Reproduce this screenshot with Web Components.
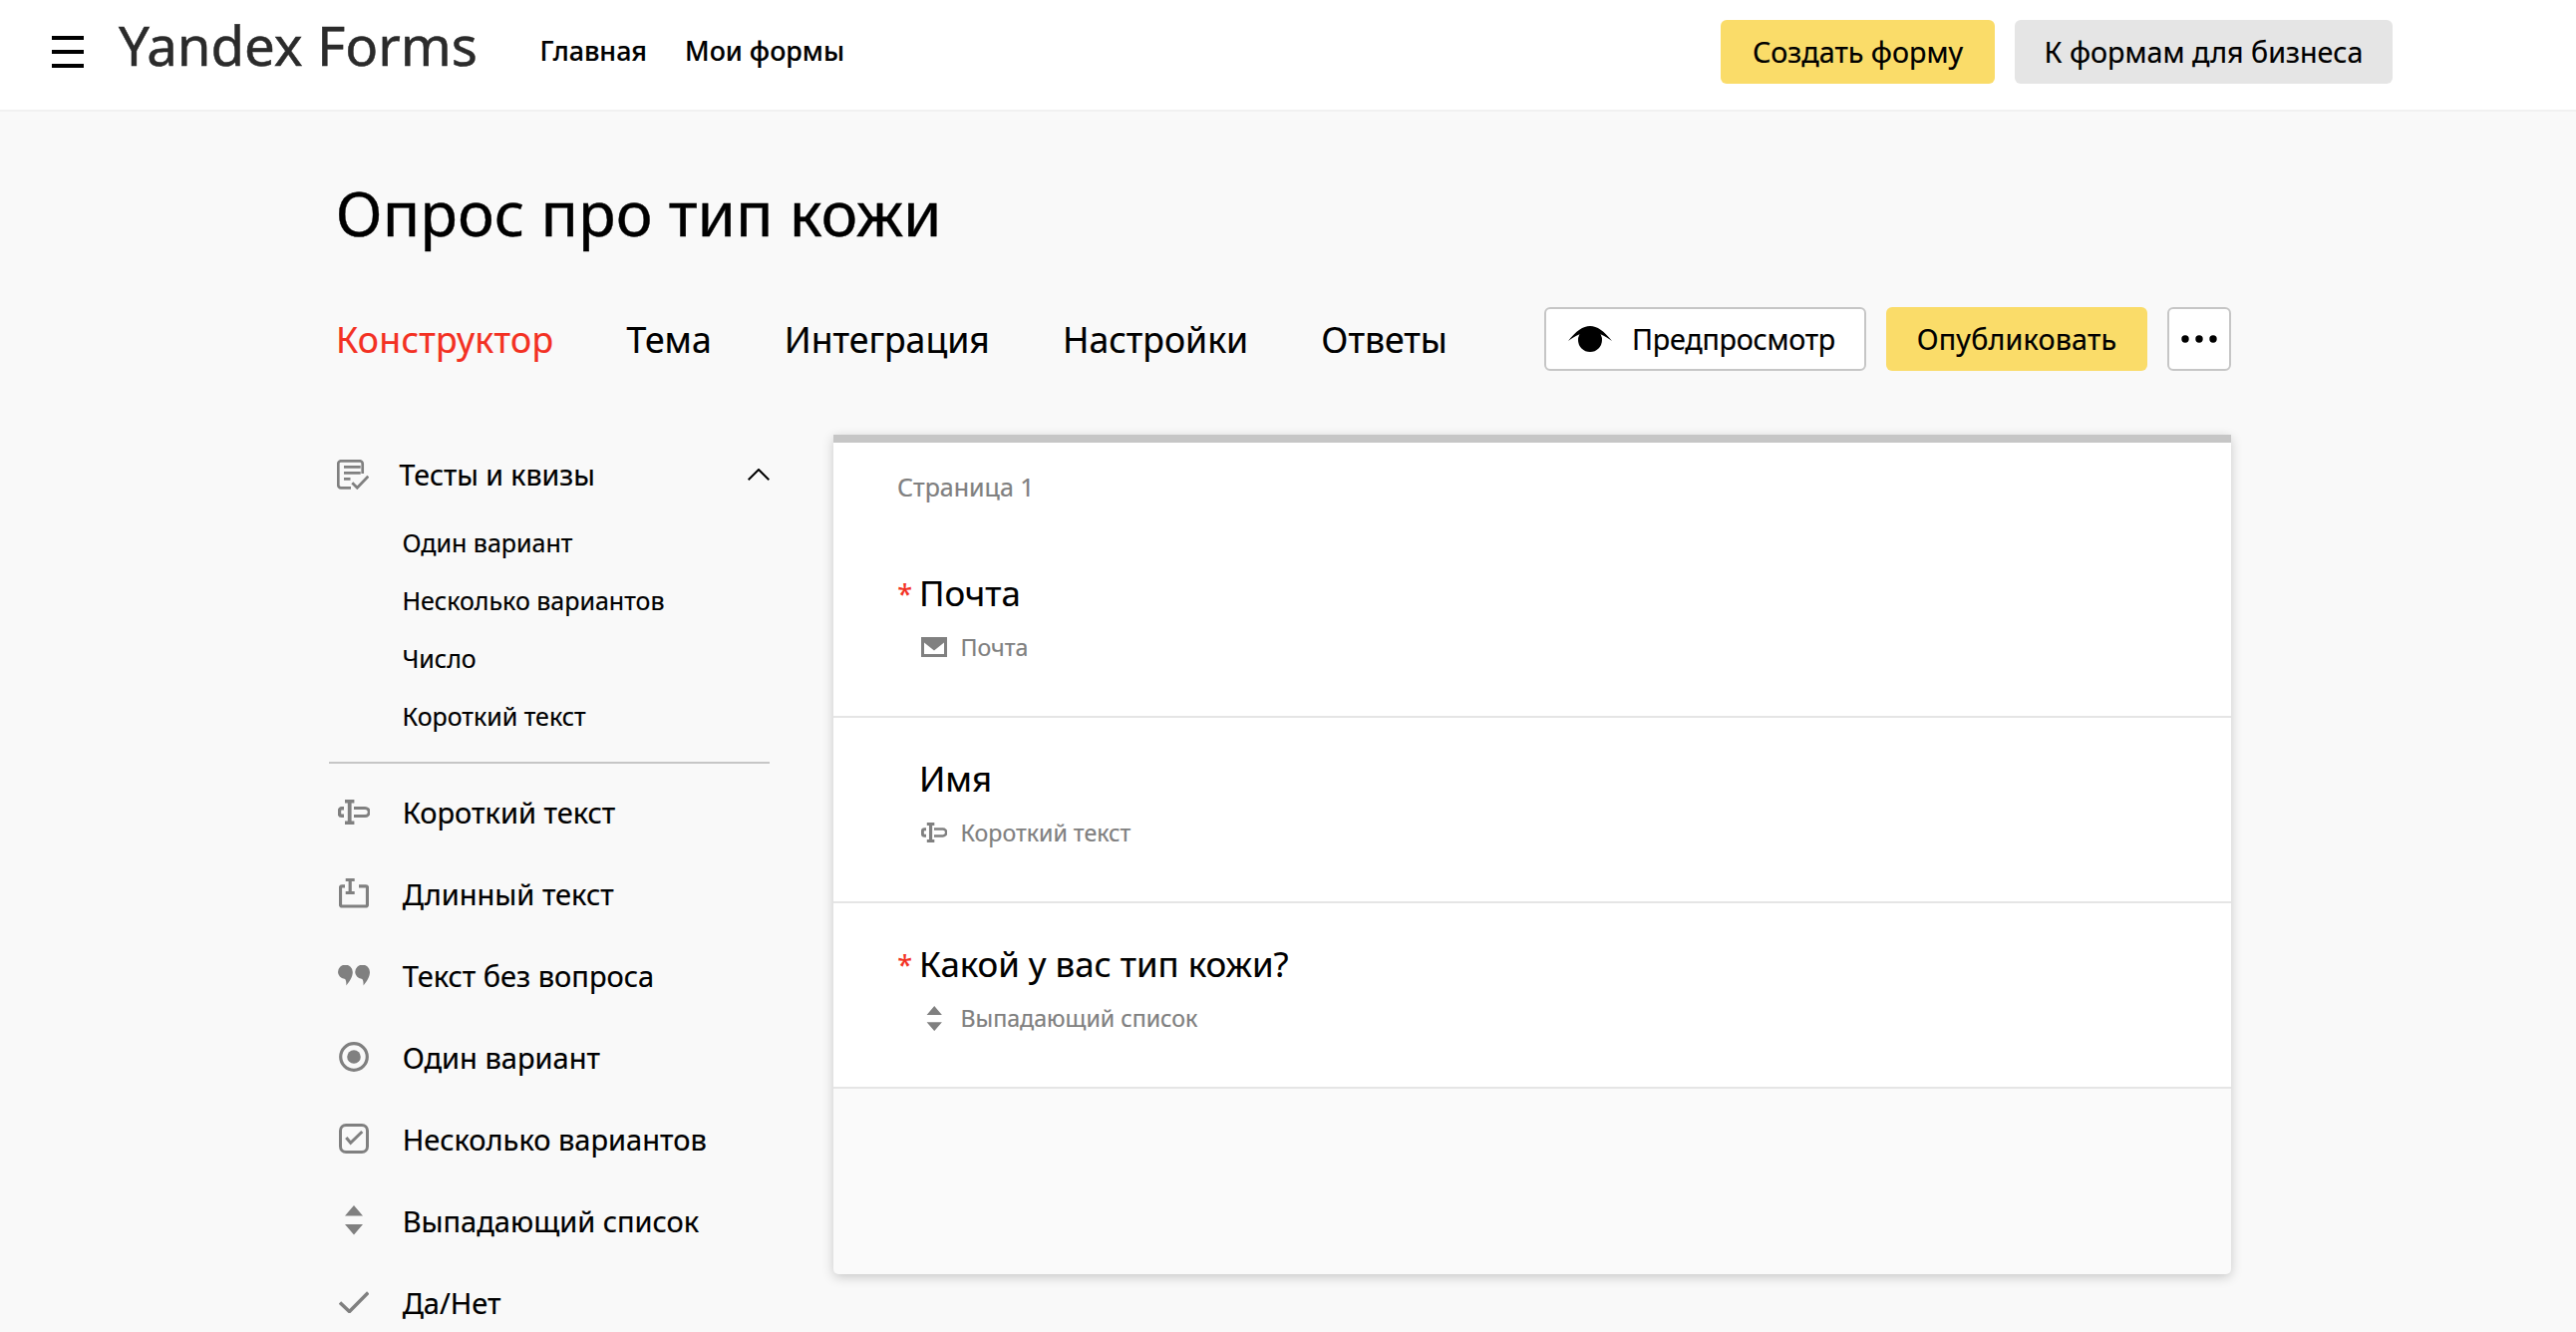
<!DOCTYPE html>
<html lang="ru"><head><meta charset="utf-8"><title>Yandex Forms</title>
<style>
html,body{margin:0;height:100%;overflow:hidden;background:#f9f9f9;font-family:"Noto Sans","Liberation Sans",sans-serif;color:#000;-webkit-text-stroke:.2px currentColor}
</style></head><body>
<x-app>
  <x-topbar slot="top">
    <x-btn w="275" kind="yellow">Создать форму</x-btn>
    <x-btn w="379" kind="gray">К формам для бизнеса</x-btn>
  </x-topbar>
  <x-formhead slot="head" title="Опрос про тип кожи">
    <x-tab active>Конструктор</x-tab><x-tab>Тема</x-tab><x-tab>Интеграция</x-tab><x-tab>Настройки</x-tab><x-tab>Ответы</x-tab>
    <x-btn slot="actions" w="323" kind="outline" style="justify-content:flex-start;padding-left:22px;letter-spacing:-.25px"><x-icon name="eye" style="margin-right:20px"></x-icon>Предпросмотр</x-btn>
    <x-btn slot="actions" w="262" kind="yellow" style="letter-spacing:.2px">Опубликовать</x-btn>
    <x-btn slot="actions" w="64" kind="outline"><x-icon name="dots"></x-icon></x-btn>
  </x-formhead>
  <x-sidebar slot="side">
    <x-side-group slot="group" label="Тесты и квизы">
      <x-side-sub>Один вариант</x-side-sub><x-side-sub>Несколько вариантов</x-side-sub><x-side-sub>Число</x-side-sub><x-side-sub>Короткий текст</x-side-sub>
    </x-side-group>
    <x-side-item icon="short">Короткий текст</x-side-item>
    <x-side-item icon="long">Длинный текст</x-side-item>
    <x-side-item icon="quote">Текст без вопроса</x-side-item>
    <x-side-item icon="radio">Один вариант</x-side-item>
    <x-side-item icon="checkbox">Несколько вариантов</x-side-item>
    <x-side-item icon="select">Выпадающий список</x-side-item>
    <x-side-item icon="check">Да/Нет</x-side-item>
  </x-sidebar>
  <x-form-card slot="card" page="Страница 1">
    <x-question required title="Почта" type="Почта" icon="mail"></x-question>
    <x-question title="Имя" type="Короткий текст" icon="short-s"></x-question>
    <x-question required title="Какой у вас тип кожи?" type="Выпадающий список" icon="select-s"></x-question>
  </x-form-card>
</x-app>
<script>
const def=(n,css,html,extra)=>{customElements.define(n,class extends HTMLElement{
  constructor(){super();this.attachShadow({mode:'open'}).innerHTML='<style>'+css+'</style>'+(typeof html==='function'?html(this):html)}
  connectedCallback(){if(extra)extra(this)}
})};
const G='#808080';
const ICONS={
 burger:[32,32,`<path d="M0 2h32M0 16h32M0 30h32" stroke="#000" stroke-width="4" fill="none"/>`],
 eye:[44,26,`<path d="M0 15C8 5 15 0 22 0s14 5 22 15C36 9 30 6.500 22 6.500S8 9 0 15Z" fill="#000"/><circle cx="22" cy="14" r="12" fill="#000"/>`],
 dots:[36,8,`<circle cx="4" cy="4" r="3.700"/><circle cx="18" cy="4" r="3.700"/><circle cx="32" cy="4" r="3.700"/>`],
 chevron:[22,12,`<path d="M.7 11.300 11 1l10.300 10.300" stroke="#000" stroke-width="2" fill="none"/>`],
 quiz:[32,30,`<g fill="none" stroke="${G}" stroke-width="2.700"><path d="M14 28.300H4A2.700 2.700 0 0 1 1.300 25.600V4A2.700 2.700 0 0 1 4 1.300H23A2.700 2.700 0 0 1 25.700 4V14"/><path d="M7 7.300h16.700M7 13.300h16.700M7 19.300h6.500"/><path d="M15.300 23.300l5 5 11-11.600"/></g>`],
 short:[32,25,`<g fill="none" stroke="${G}"><path d="M11.700 0v25" stroke-width="3.800"/><path d="M7 1.700h9.400M7 23.300h9.400" stroke-width="3.400"/><path d="M6 8.800H3.600a2.100 2.100 0 0 0-2.100 2.100v3.200a2.100 2.100 0 0 0 2.100 2.100H6" stroke-width="3.400"/><path d="M16 8.500h11.200a4 4 0 0 1 0 8H16" stroke-width="3"/></g>`],
 'short-s':[26,20,`<g fill="none" stroke="${G}"><path d="M11.700 0v25" stroke-width="4"/><path d="M7 1.800h9.400M7 23.200h9.400" stroke-width="3.600"/><path d="M6 8.500H3.800a2.300 2.300 0 0 0-2.300 2.300v3.400a2.300 2.300 0 0 0 2.300 2.300H6" stroke-width="3.600"/><path d="M16 8.200h11a4.200 4.200 0 0 1 0 8.600H16" stroke-width="3.200"/></g>`,null,[32,25]],
 long:[30,30,`<g fill="none" stroke="${G}" stroke-width="3.200"><path d="M6 7.800H3A1.500 1.500 0 0 0 1.500 9.300v17.200A1.500 1.500 0 0 0 3 28h24a1.500 1.500 0 0 0 1.500-1.500V9.300A1.500 1.500 0 0 0 27 7.800H20"/><path d="M11.200 0v15M6.700 1.500h9M6.700 14.500h9"/></g>`],
 quote:[32,21,`<path fill="${G}" d="M0 7a7 7 0 1 1 14.800 0c0 5-3.500 10-6.500 13.500.3-4-.5-6.700-2-6.700A7 7 0 0 1 0 7Z"/><path fill="${G}" d="M17.200 7a7 7 0 1 1 14.800 0c0 5-3.500 10-6.500 13.500.3-4-.5-6.700-2-6.700A7 7 0 0 1 17.200 7Z"/>`],
 radio:[30,30,`<circle cx="15" cy="15" r="13.300" fill="none" stroke="${G}" stroke-width="3.200"/><circle cx="15" cy="15" r="6.800" fill="${G}"/>`],
 checkbox:[30,30,`<rect x="1.500" y="1.500" width="27" height="27" rx="5.500" fill="none" stroke="${G}" stroke-width="3"/><path d="M7.300 14l4.400 5.300L23.300 8" fill="none" stroke="${G}" stroke-width="3"/>`],
 select:[18,30,`<path d="M9 0l9 10.500H0ZM0 19h18l-9 10.500Z" fill="${G}"/>`],
 check:[30,22,`<path d="M1 11.500l9.500 9L29.300 1.500" fill="none" stroke="${G}" stroke-width="3.500"/>`],
 mail:[26,20,`<path fill="${G}" fill-rule="evenodd" d="M0 0h26v20H0ZM3 5.500V17h20V5.500L13 13.500Z"/>`],
 'select-s':[16.500,25.500,null,'select']
};
def('x-icon',':host{display:inline-flex;flex:none;align-items:center;justify-content:center;fill:#000}svg{display:block}',h=>{
  const n=h.getAttribute('name'),i=ICONS[n];const src=i[3]?ICONS[i[3]]:i;const vb=i[4]||src;
  return `<svg width="${i[0]}" height="${i[1]}" viewBox="0 0 ${vb[0]} ${vb[1]}" aria-hidden="true">${src[2]}</svg>`});
def('x-btn',`:host{display:inline-flex;flex:none;align-items:center;justify-content:center;box-sizing:border-box;height:64px;border-radius:6px;font-size:28.700px;line-height:40px;color:#000;cursor:pointer;white-space:nowrap}
 :host([kind=yellow]){background:#fadc69}:host([kind=gray]){background:#e5e5e5}:host([kind=outline]){background:#fff;border:2px solid #c6c6c6}`,
 '<slot></slot>',h=>{h.style.width=h.getAttribute('w')+'px'});
def('x-topbar',`:host{display:flex;align-items:flex-start;box-sizing:border-box;height:112px;padding:0 184px 0 52px;background:#fff;border-bottom:2px solid #f1f1f1}
 .burger{margin-top:36px;margin-right:35px}.logo{font-size:54.600px;line-height:70px;margin-top:10px;color:#2b2b2b;white-space:nowrap;-webkit-text-stroke:.5px #2b2b2b}
 nav{display:flex;gap:38px;margin-left:62.500px;margin-top:31px;font-size:26.800px;line-height:40px;font-weight:500;white-space:nowrap}
 .acts{display:flex;gap:20px;margin-left:auto;margin-top:20px}`,
 `<x-icon class="burger" name="burger"></x-icon><div class="logo">Yandex Forms</div><nav><span>Главная</span><span>Мои формы</span></nav><div class="acts"><slot></slot></div>`);
def('x-tab',`:host{display:block;font-size:35.600px;line-height:50px;white-space:nowrap;color:#000}:host([active]){color:#f33123;letter-spacing:.3px}`,'<slot></slot>');
def('x-formhead',`:host{display:block;padding-top:61px}
 h1{margin:0 0 55px 6.500px;font-size:62px;line-height:80px;font-weight:400;white-space:nowrap;-webkit-text-stroke:.4px #000}
 .row{display:flex;align-items:center;height:64px;margin-bottom:64px}.tabs{display:flex;gap:73.200px;padding-left:7px}.acts{display:flex;gap:20px;margin-left:auto}`,
 h=>`<h1>${h.getAttribute('title')}</h1><div class="row"><div class="tabs"><slot></slot></div><div class="acts"><slot name="actions"></slot></div></div>`);
def('x-side-sub',`:host{display:block;font-size:25px;line-height:58px;padding-left:73.500px;white-space:nowrap}`,'<slot></slot>');
def('x-side-group',`:host{display:block;padding-top:10px;padding-bottom:16.700px;border-bottom:2px solid #c6c6c6;margin-bottom:7.300px}
 .h{display:flex;align-items:center;height:60px;padding-left:8px;margin-bottom:9.300px}.t{margin-left:30.500px;font-size:28.500px;line-height:40px;white-space:nowrap}.c{margin-left:auto}`,
 h=>`<div class="h"><x-icon name="quiz"></x-icon><span class="t">${h.getAttribute('label')}</span><x-icon class="c" name="chevron"></x-icon></div><slot></slot>`);
def('x-side-item',`:host{display:flex;align-items:center;height:82px;padding-left:9px;font-size:29px;white-space:nowrap}.i{width:32px;margin-right:32.700px}`,
 h=>`<x-icon class="i" name="${h.getAttribute('icon')}"></x-icon><slot></slot>`);
def('x-sidebar',`:host{display:block;flex:none;width:442px}`,'<slot name="group"></slot><slot></slot>');
def('x-question',`:host{display:block;box-sizing:border-box;height:186px;padding:37px 0 0 61px;background:#fff;border-bottom:2px solid #e5e5e5}
 .q{display:flex;align-items:center;height:48px;font-size:34.800px;line-height:48px;white-space:nowrap}
 .star{width:25px;flex:none;color:#f33123;font-size:27px;line-height:48px;transform:translate(3.200px,.5px)}
 .s{display:flex;align-items:center;height:32px;margin-top:14.400px;padding-left:27px;font-size:23.200px;line-height:32px;color:#808080;white-space:nowrap}
 .i{width:26px;margin-right:13.500px}`,
 h=>`<div class="q"><span class="star">${h.hasAttribute('required')?'*':''}</span><span>${h.getAttribute('title')}</span></div><div class="s"><x-icon class="i" name="${h.getAttribute('icon')}"></x-icon><span>${h.getAttribute('type')}</span></div>`);
def('x-form-card',`:host{display:block;flex:1;box-sizing:border-box;height:842px;min-width:0;border-top:8px solid #c6c6c6;border-radius:0 0 5px 5px;background:#fafafa;box-shadow:0 3px 12px rgba(0,0,0,.2)}
 .p{box-sizing:border-box;height:90px;padding:26px 0 0 64px;background:#fff;font-size:25px;line-height:36px;color:#808080;white-space:nowrap}`,
 h=>`<div class="p">${h.getAttribute('page')}</div><slot></slot>`);
def('x-app',`:host{display:block}.main{box-sizing:border-box;width:1908px;margin-left:330px}.cols{display:flex;gap:64px;align-items:flex-start}`,
 `<slot name="top"></slot><div class="main"><slot name="head"></slot><div class="cols"><slot name="side"></slot><slot name="card"></slot></div></div>`);
</script>
</body></html>
